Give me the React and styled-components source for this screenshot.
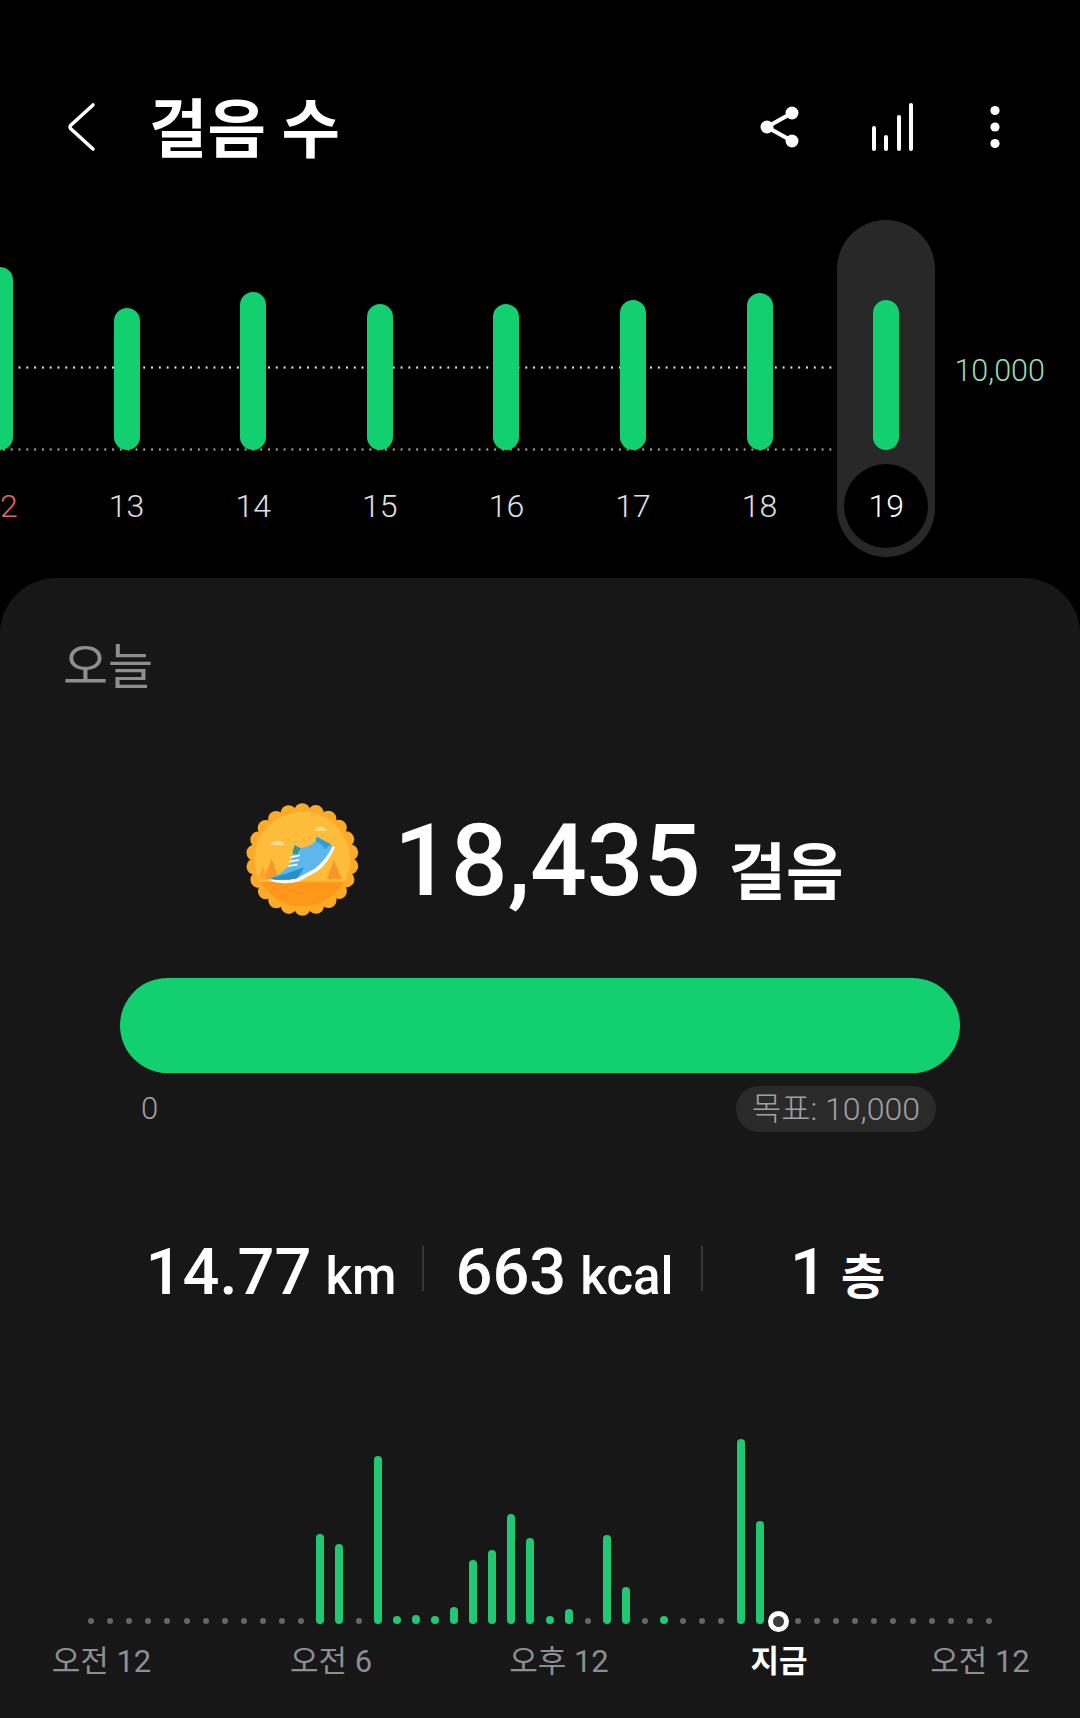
import styled, { createGlobalStyle } from "styled-components";

const GlobalStyle = createGlobalStyle`
  html, body {
    margin: 0;
    padding: 0;
    background: #000;
  }
  * {
    box-sizing: border-box;
  }
`;

const days = [
  { label: "12", height: 183, sunday: true },
  { label: "13", height: 142 },
  { label: "14", height: 158 },
  { label: "15", height: 146 },
  { label: "16", height: 146 },
  { label: "17", height: 150 },
  { label: "18", height: 157 },
  { label: "19", height: 150, active: true },
];

// 48 half hour slots, value is the bar height, 0 = no steps yet
const slots = [
  0, 0, 0, 0, 0, 0, 0, 0, 0, 0, 0, 0, 90, 80, 0, 168, 8, 9, 8, 17, 64, 74, 110, 86, 8, 15, 0, 89,
  37, 0, 8, 0, 0, 0, 185, 103, 0, 0, 0, 0, 0, 0, 0, 0, 0, 0, 0, 0,
];
const NOW_SLOT = 36;

const timeLabels = [
  { text: "오전 12" },
  { text: "오전 6" },
  { text: "오후 12" },
  { text: "지금", now: true },
  { text: "오전 12" },
];

function BackIcon() {
  return (
    <svg width="30" height="52" viewBox="0 0 30 52">
      <path d="M27 4 L4.5 24.5 Q3.5 26 4.5 27.5 L27 48" fill="none" stroke="#fff" strokeWidth="3.6" strokeLinecap="round" strokeLinejoin="round" />
    </svg>
  );
}

function ShareIcon() {
  return (
    <svg width="44" height="50" viewBox="0 0 44 50">
      <path d="M33 11 L8 25 L33 39" fill="none" stroke="#fff" strokeWidth="4.2" />
      <circle cx="33" cy="11" r="6.5" fill="#fff" />
      <circle cx="8" cy="25" r="6.5" fill="#fff" />
      <circle cx="33" cy="39" r="6.5" fill="#fff" />
    </svg>
  );
}

function BarsIcon() {
  return (
    <svg width="44" height="50" viewBox="0 0 44 50">
      <g stroke="#fff" strokeWidth="4" strokeLinecap="round">
        <line x1="4" y1="26" x2="4" y2="47" />
        <line x1="16" y1="35" x2="16" y2="47" />
        <line x1="29" y1="15" x2="29" y2="47" />
        <line x1="41" y1="3" x2="41" y2="47" />
      </g>
    </svg>
  );
}

function MoreIcon() {
  return (
    <svg width="12" height="50" viewBox="0 0 12 50">
      <circle cx="6" cy="8.5" r="4.6" fill="#fff" />
      <circle cx="6" cy="25" r="4.6" fill="#fff" />
      <circle cx="6" cy="41.5" r="4.6" fill="#fff" />
    </svg>
  );
}

function Badge() {
  const scallops = Array.from({ length: 22 }, (_, i) => {
    const a = (i / 22) * Math.PI * 2 + 0.14;
    return { x: 247 + Math.cos(a) * 145, y: 238.5 + Math.sin(a) * 145 };
  });

  return (
    <svg width="113" height="113" viewBox="78 69 339 339">
      <circle cx="247" cy="238.5" r="150" fill="#fbab28" />
      {scallops.map((p, i) => (
        <circle key={i} cx={p.x} cy={p.y} r="24" fill="#fbab28" />
      ))}
      <circle cx="247" cy="238.5" r="143" fill="#fdbd3a" />
      <path d="M121 305 A143 143 0 0 0 373 305 Z" fill="#ff981a" />
      <path d="M155 235 L177 298 L133 298 Z" fill="#f9972a" />
      <path d="M128 258 L141 298 L116 298 Z" fill="#fba52c" />
      <path d="M342 240 L366 298 L320 298 Z" fill="#f9972a" />
      <path d="M150 196 Q155 182 172 182 Q188 182 195 196 Z" fill="#fddc8e" />
      <path d="M283 152 Q290 140 302 140 Q315 142 322 152 Z" fill="#fddc8e" />
      <path d="M152 294 Q198 276 214 245 L224 196 L242 205 Q268 200 285 186 L290 170 L340 198 Q315 250 285 268 L230 296 Q190 302 152 298 Z" fill="#5cb8ec" />
      <path d="M154 294 Q200 282 252 262 L232 296 Q190 302 154 298 Z" fill="#2a8fc8" />
      <path d="M290 170 L332 192 L316 208 Q304 190 288 186 Z" fill="#2f9ed4" />
      <path d="M224 196 L242 205 L230 226 L217 218 Z" fill="#2a9a9a" />
      <path d="M150 298 Q190 304 228 296 L284 266 Q318 240 338 198 L345 201 Q326 248 292 274 L238 304 Q190 316 150 302 Z" fill="#fff" />
      <g stroke="#fff" strokeWidth="5" strokeLinecap="round">
        <line x1="211" y1="232" x2="237" y2="226" />
        <line x1="209" y1="245" x2="235" y2="240" />
        <line x1="206" y1="258" x2="230" y2="254" />
      </g>
    </svg>
  );
}

export default function App() {
  return (
    <Screen>
      <GlobalStyle />
      <Header>
        <BackButton>
          <BackIcon />
        </BackButton>
        <Title>걸음 수</Title>
        <Actions>
          <ShareIcon />
          <BarsIcon />
          <MoreIcon />
        </Actions>
      </Header>

      <Week>
        <DotLine $top={146} $color="#c4ecd0" />
        <DotLine $top={228} $color="#a0a0a0" />
        {days.map((day) => (
          <Day key={day.label}>
            <Track $active={day.active}>
              <BarArea>
                <DayBar style={{ height: day.height }} />
              </BarArea>
              <DayLabel $active={day.active} $sunday={day.sunday}>
                {day.label}
              </DayLabel>
            </Track>
          </Day>
        ))}
        <GoalLabel>10,000</GoalLabel>
      </Week>

      <Card>
        <Today>오늘</Today>

        <Summary>
          <Badge />
          <Steps>18,435</Steps>
          <StepsUnit>걸음</StepsUnit>
        </Summary>

        <Progress />
        <ProgressScale>
          <ScaleZero>0</ScaleZero>
          <GoalPill>목표: 10,000</GoalPill>
        </ProgressScale>

        <Stats>
          <Stat>
            <StatValue>14.77</StatValue>
            <StatUnit>km</StatUnit>
          </Stat>
          <Stat $divider $shift={4}>
            <StatValue>663</StatValue>
            <StatUnit>kcal</StatUnit>
          </Stat>
          <Stat $divider $shift={12}>
            <StatValue>1</StatValue>
            <StatUnit $hangul>층</StatUnit>
          </Stat>
        </Stats>

        <Hours>
          {slots.map((value, i) => (
            <Slot key={i}>
              {value > 0 ? <HourBar style={{ height: value }} /> : <HourDot />}
              {i === NOW_SLOT && <NowMarker />}
            </Slot>
          ))}
        </Hours>

        <TimeAxis>
          {timeLabels.map((label, i) => (
            <TimeLabel key={i} $now={label.now}>
              {label.text}
            </TimeLabel>
          ))}
        </TimeAxis>
      </Card>
    </Screen>
  );
}

const Screen = styled.div`
  position: relative;
  width: 1080px;
  height: 1718px;
  overflow: hidden;
  background: #000;
  font-family: Roboto, "Noto Sans CJK KR", sans-serif;
`;

const Header = styled.header`
  display: flex;
  align-items: center;
  height: 62px;
  margin: 96px 0 62px;
  padding-left: 66px;
`;

const BackButton = styled.div`
  display: flex;
  width: 83px;
`;

const Title = styled.h1`
  margin: 8px 0 0;
  font-size: 63.5px;
  font-weight: 700;
  line-height: 62px;
  color: #fff;
`;

const Actions = styled.div`
  display: grid;
  grid-template-columns: 111px 111px 95px;
  justify-items: center;
  align-items: center;
  margin-left: auto;
  padding-right: 38px;
`;

const Week = styled.section`
  position: relative;
  display: flex;
  height: 337px;
  margin-left: -63.3px;
`;

const DotLine = styled.div`
  position: absolute;
  top: ${(p) => p.$top}px;
  left: 63px;
  width: 845px;
  height: 3px;
  background-image: radial-gradient(circle, ${(p) => p.$color} 1px, transparent 1.3px);
  background-size: 7.8px 3px;
`;

const Day = styled.div`
  position: relative;
  display: flex;
  justify-content: center;
  flex: none;
  width: 126.6px;
`;

const Track = styled.div`
  display: flex;
  flex-direction: column;
  align-items: center;
  width: 98px;
  height: 337px;
  border-radius: 49px;
  background: ${(p) => (p.$active ? "#282828" : "transparent")};
`;

const BarArea = styled.div`
  display: flex;
  align-items: flex-end;
  height: 230px;
`;

const DayBar = styled.div`
  width: 26px;
  border-radius: 13px;
  background: #12cf6f;
`;

const DayLabel = styled.div`
  display: flex;
  align-items: center;
  justify-content: center;
  width: 84px;
  height: 84px;
  margin-top: 14px;
  border-radius: 50%;
  background: ${(p) => (p.$active ? "#000" : "transparent")};
  font-size: 32px;
  font-weight: 300;
  color: ${(p) => (p.$active ? "#fff" : p.$sunday ? "#e8636d" : "#e0e0e0")};
`;

const GoalLabel = styled.div`
  align-self: flex-start;
  margin: 133px 0 0 5px;
  font-size: 30.5px;
  font-weight: 300;
  line-height: 36px;
  color: #9adcad;
`;

const Card = styled.main`
  height: 1140px;
  margin-top: 21px;
  padding-top: 62px;
  border-radius: 56px 56px 0 0;
  background: #171717;
`;

const Today = styled.h2`
  margin: 0 0 0 63px;
  font-size: 49px;
  font-weight: 400;
  line-height: 56px;
  color: #8e8e8e;
`;

const Summary = styled.div`
  display: flex;
  align-items: flex-start;
  height: 113px;
  margin-top: 107px;
  padding-left: 246px;
`;

const Steps = styled.div`
  margin-left: 35px;
  font-size: 100px;
  font-weight: 500;
  line-height: 116px;
  color: #fff;
`;

const StepsUnit = styled.div`
  margin: 36px 0 0 28px;
  font-size: 62.5px;
  font-weight: 700;
  line-height: 70px;
  color: #fff;
`;

const Progress = styled.div`
  width: 840px;
  height: 95px;
  margin: 62px 0 0 120px;
  border-radius: 48px;
  background: #12cf6f;
`;

const ProgressScale = styled.div`
  display: flex;
  align-items: center;
  justify-content: space-between;
  height: 46px;
  margin: 13px 144px 0 141px;
`;

const ScaleZero = styled.span`
  margin-top: -2px;
  font-size: 31px;
  font-weight: 300;
  color: #a0a0a0;
`;

const GoalPill = styled.span`
  display: flex;
  align-items: center;
  height: 46px;
  padding: 0 16px 6px;
  border-radius: 23px;
  background: #2a2a2a;
  font-size: 32px;
  font-weight: 300;
  color: #a0a0a0;
`;

const Stats = styled.div`
  display: grid;
  grid-template-columns: 302px 279px 259px;
  margin: 114px 0 0 120px;
`;

const Stat = styled.div`
  display: flex;
  justify-content: center;
  align-items: baseline;
  gap: 14px;
  height: 45px;
  padding-left: ${(p) => p.$shift || 0}px;
  border-left: ${(p) => (p.$divider ? "2px solid #363636" : "none")};
  line-height: 53px;
  color: #fff;
`;

const StatValue = styled.span`
  font-size: 65px;
  font-weight: 500;
`;

const StatUnit = styled.span`
  font-size: ${(p) => (p.$hangul ? 48 : 51)}px;
  font-weight: ${(p) => (p.$hangul ? 700 : 500)};
`;

const Hours = styled.div`
  display: grid;
  grid-template-columns: repeat(48, 1fr);
  align-items: end;
  height: 185px;
  margin: 148px 81.5px 0;
`;

const Slot = styled.div`
  position: relative;
  display: flex;
  justify-content: center;
`;

const HourBar = styled.div`
  width: 8px;
  border-radius: 4px;
  background: #1fc871;
`;

const HourDot = styled.div`
  width: 6px;
  height: 6px;
  border-radius: 50%;
  background: #666;
`;

const NowMarker = styled.div`
  position: absolute;
  bottom: -7.5px;
  left: 50%;
  width: 21px;
  height: 21px;
  margin-left: -10.5px;
  border: 5.5px solid #fff;
  border-radius: 50%;
  background: #3c3c3c;
`;

const TimeAxis = styled.div`
  display: grid;
  grid-template-columns: 203px 256px 200px 240px 162px;
  margin-top: 18px;
`;

const TimeLabel = styled.div`
  font-size: 31px;
  font-weight: ${(p) => (p.$now ? 700 : 400)};
  line-height: 40px;
  text-align: center;
  color: ${(p) => (p.$now ? "#fff" : "#8e8e8e")};
`;
